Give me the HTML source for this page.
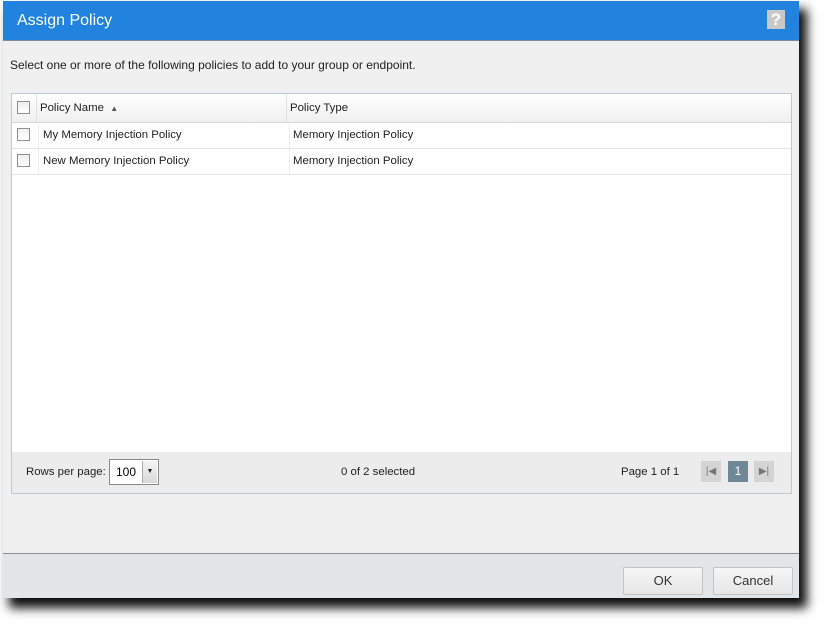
<!DOCTYPE html>
<html><head><style>
body{margin:0;width:826px;height:629px;background:#fff;font-family:"Liberation Sans",sans-serif;position:relative;overflow:hidden;font-size:11.4px;color:#222}
.dlg{position:absolute;left:3px;top:1px;width:796px;height:597px;background:#f0f0f0;box-shadow:7px 9px 10px 1px rgba(0,0,0,.95)}
.hd{height:39px;background:#2283de;color:#fff;font-size:16px;line-height:39px;padding-left:14px;border-bottom:1px solid #7a8a99}
.help{position:absolute;right:14px;top:9px;width:18px;height:19px;background:#c8c8c8;color:#fff;font-weight:bold;font-size:17px;line-height:19px;text-align:center}
.intro{position:absolute;left:7px;top:57px;font-size:12px}
.tbl{position:absolute;left:8px;top:92px;width:779px;height:399px;border:1px solid #b9cad8;background:#fff}
.th{height:28px;background:linear-gradient(#fff,#f0f0f0);border-bottom:1px solid #d8d8d8;position:relative}
.row{height:25px;border-bottom:1px solid #e6e6e6;position:relative}
.cb{position:absolute;left:5px;width:11px;height:11px;border:1px solid #8f8f8f;background:linear-gradient(#eee,#fff)}
.t{position:absolute;line-height:1}
.ft{position:absolute;left:0;right:0;bottom:0;height:41px;background:#ececec}
.sel{position:absolute;left:97px;top:7px;width:48px;height:24px;border:1px solid #888;background:#fff}
.pb{position:absolute;top:9px;width:20px;height:21px;background:#d4d4d4;color:#777;text-align:center;line-height:21px;font-size:10px}
.bot{position:absolute;left:0;right:0;bottom:0;height:44px;background:#e3e6e9;border-top:1px solid #8a8f94}
.btn{position:absolute;top:13px;width:78px;height:26px;border:1px solid #c4c4c4;background:linear-gradient(#f6f6f6,#e6e6e6);border-radius:2px;text-align:center;line-height:26px;font-size:13px;color:#333}
</style></head><body>
<div class="dlg">
<div class="hd">Assign Policy</div>
<div class="help">?</div>
<div class="intro">Select one or more of the following policies to add to your group or endpoint.</div>
<div class="tbl">
 <div class="th"><div class="cb" style="top:7px"></div><div style="position:absolute;left:24px;top:0;bottom:0;border-left:1px solid #e0e0e0"></div><div class="t" style="left:28px;top:9px">Policy Name &nbsp;<span style="font-size:8px;color:#555">▲</span></div><div style="position:absolute;left:274px;top:0;bottom:0;border-left:1px solid #e0e0e0"></div><div class="t" style="left:278px;top:9px">Policy Type</div></div>
 <div class="row"><div class="cb" style="top:5px"></div><div style="position:absolute;left:26px;top:0;bottom:0;border-left:1px solid #eee"></div><div class="t" style="left:31px;top:7px">My Memory Injection Policy</div><div style="position:absolute;left:277px;top:0;bottom:0;border-left:1px solid #eee"></div><div class="t" style="left:281px;top:7px">Memory Injection Policy</div></div>
 <div class="row"><div class="cb" style="top:5px"></div><div style="position:absolute;left:26px;top:0;bottom:0;border-left:1px solid #eee"></div><div class="t" style="left:31px;top:7px">New Memory Injection Policy</div><div style="position:absolute;left:277px;top:0;bottom:0;border-left:1px solid #eee"></div><div class="t" style="left:281px;top:7px">Memory Injection Policy</div></div>
 <div class="ft">
  <div class="t" style="left:14px;top:15px">Rows per page:</div>
  <div class="sel"><span class="t" style="left:6px;top:6px;font-size:12px;color:#000">100</span><div style="position:absolute;right:1px;top:1px;width:14px;height:22px;background:linear-gradient(#f4f4f4,#d8d8d8);border-left:1px solid #aaa;font-size:7px;text-align:center;line-height:22px">▼</div></div>
  <div class="t" style="left:329px;top:15px">0 of 2 selected</div>
  <div class="t" style="left:609px;top:15px">Page 1 of 1</div>
  <div class="pb" style="left:689px">|◀</div>
  <div class="pb" style="left:716px;background:#6f8796;color:#fff;font-size:12px">1</div>
  <div class="pb" style="left:742px">▶|</div>
 </div>
</div>
<div class="bot"><div class="btn" style="left:620px">OK</div><div class="btn" style="left:710px">Cancel</div></div>
</div>
</body></html>
